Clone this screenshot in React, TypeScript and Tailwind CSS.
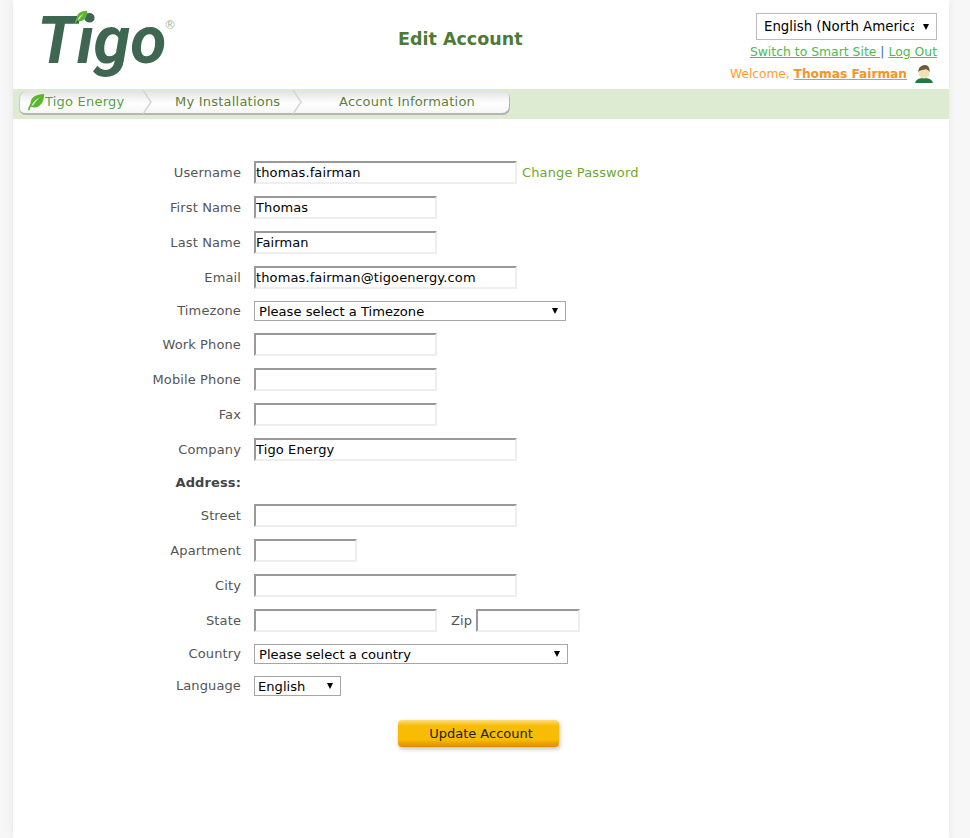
import type { ReactNode } from 'react';

function Leaf({ className }: { className: string }) {
  return (
    <svg viewBox="0 0 20 20" className={className}>
      <path d="M1 19 C2 15 3 13 4 11 C4 5 10 1 19 1 C19 10 15 16 8 16 C6 16 5 15.500 4.500 15 L2.500 19.500 Z" fill="#5cb531" />
      <path d="M5 14 C7 10 10 7 14 5 C11 8 9 10 7 14 Z" fill="#d5f0c0" />
    </svg>
  );
}

function Avatar() {
  return (
    <svg viewBox="0 0 20 20" className="w-5 h-5">
      <path d="M1 19 C2 15 6 14 10 14 C14 14 18 15 19 19 Z" fill="#1f7a46" />
      <ellipse cx="10" cy="9" rx="5.500" ry="5.500" fill="#f3e0b8" />
      <path d="M4.500 8 C4 3 8 1 11 1 C15 1 16 5 15.500 8 C14 6 13 5 11 5.500 C9 6 6 6 4.500 8 Z" fill="#6b5a3c" />
    </svg>
  );
}

function Chevron() {
  return (
    <svg viewBox="0 0 10 24" className="w-2.5 h-6 shrink-0">
      <path d="M1 0 L9 12 L1 24" fill="none" stroke="#d6d6d6" strokeWidth="1.500" />
    </svg>
  );
}

function Row({ label, children }: { label: ReactNode; children?: ReactNode }) {
  return (
    <div className="flex items-center">
      <div className="w-[228px] text-right text-[13px] tracking-[0.12px] text-[#555]">{label}</div>
      <div className="ml-[13px] flex items-center">{children}</div>
    </div>
  );
}

function TextInput({ value = '', className }: { value?: string; className: string }) {
  return (
    <input
      readOnly
      value={value}
      className={`h-[23px] border-2 border-t-[#999] border-l-[#999] border-r-[#eee] border-b-[#eee] px-0 text-[13px] tracking-[0.12px] text-black outline-none ${className}`}
    />
  );
}

function Select({ options, className }: { options: string[]; className: string }) {
  return (
    <div className={`relative ${className}`}>
      <select className="block w-full h-full appearance-none border border-[#a6a6a6] bg-white pl-1 pr-5 text-[13.100px] text-black outline-none">
        {options.map((o) => (
          <option key={o}>{o}</option>
        ))}
      </select>
      <div className="absolute right-[8px] top-1/2 -translate-y-1/2 border-x-[3.500px] border-t-[6px] border-x-transparent border-t-black" />
    </div>
  );
}

export default function App() {
  return (
    <div className="min-h-[838px] bg-[#f7f7f7] font-['DejaVu_Sans','Verdana',sans-serif]">
      <div className="mx-[13px] w-[936px] h-[838px] bg-white shadow-[0_0_8px_rgba(0,0,0,0.08)]">
        {/* Header */}
        <header className="relative flex h-[89px] justify-between">
          <div className="relative ml-[24px] h-[80px] w-[143px]">
            <span className="absolute left-0 top-[1px] text-[66px] leading-[80px] font-bold italic text-[#3f6650] font-['Roboto',sans-serif]">
              Tigo
            </span>
            <Leaf className="absolute left-[37px] top-[9px] w-[14px] h-[16px]" />
            <span className="absolute left-[127px] top-[19px] text-[12px] leading-none text-[#a3b8ac]">®</span>
          </div>
          <h1 className="absolute left-[385px] top-[27px] text-[17.500px] leading-6 font-bold text-[#4e7a35]">Edit Account</h1>
          <div className="mr-[12px] mt-[13px] flex flex-col items-end">
            <Select options={['English (North America)']} className="w-[181px] h-[27px] [&_select]:border-[#bbb] [&_select]:pl-[7px] [&_select]:pr-[22px] [&_select]:text-[13.33px]" />
            <div className="mt-[2px] text-[12.400px] leading-5 text-[#2c6f9e]">
              <a className="text-[#4dbb4d] underline">Switch to Smart Site </a>|{' '}
              <a className="text-[#4dbb4d] underline">Log Out</a>
            </div>
            <div className="mt-[2px] flex items-center text-[12.200px] text-[#ff9c2e]">
              Welcome,&nbsp;<a className="font-bold underline text-[#f7931e]">Thomas Fairman</a>
              <span className="ml-[7px] mr-[3px]">
                <Avatar />
              </span>
            </div>
          </div>
        </header>

        {/* Breadcrumb */}
        <nav className="h-[30px] bg-[#dcebd2] pl-[6px] pt-[2px]">
          <div className="flex h-[24px] w-[491px] items-center rounded-[7px] bg-gradient-to-b from-[#e2e2e2] via-white to-[#f4f4f4] pb-[2px] text-[13px] tracking-[0.22px] text-[#5e7f3c] shadow-[inset_-1px_-2px_0_#b5b5b5,inset_1px_0_0_#c8c8c8]">
            <Leaf className="ml-[8px] w-[18px] h-[18px]" />
            <span className="w-[97px] text-[#55a045]">Tigo Energy</span>
            <Chevron />
            <span className="ml-[23px] w-[117px]">My Installations</span>
            <Chevron />
            <span className="ml-[37px]">Account Information</span>
          </div>
        </nav>

        {/* Form */}
        <form className="mt-[42px] flex flex-col gap-3">
          <Row label="Username">
            <TextInput value="thomas.fairman" className="w-[263px]" />
            <a className="ml-[5px] text-[13px] tracking-[0.13px] text-[#6ea82d]">Change Password</a>
          </Row>
          <Row label="First Name">
            <TextInput value="Thomas" className="w-[183px]" />
          </Row>
          <Row label="Last Name">
            <TextInput value="Fairman" className="w-[183px]" />
          </Row>
          <Row label="Email">
            <TextInput value="thomas.fairman@tigoenergy.com" className="w-[263px]" />
          </Row>
          <Row label="Timezone">
            <Select options={['Please select a Timezone']} className="w-[312px] h-[20px]" />
          </Row>
          <Row label="Work Phone">
            <TextInput className="w-[183px]" />
          </Row>
          <Row label="Mobile Phone">
            <TextInput className="w-[183px]" />
          </Row>
          <Row label="Fax">
            <TextInput className="w-[183px]" />
          </Row>
          <Row label="Company">
            <TextInput value="Tigo Energy" className="w-[263px]" />
          </Row>
          <div className="h-[19px]">
            <Row label={<b className="text-[#444]">Address:</b>} />
          </div>
          <Row label="Street">
            <TextInput className="w-[263px]" />
          </Row>
          <Row label="Apartment">
            <TextInput className="w-[103px]" />
          </Row>
          <Row label="City">
            <TextInput className="w-[263px]" />
          </Row>
          <Row label="State">
            <TextInput className="w-[183px]" />
            <span className="ml-[14px] mr-[4px] text-[13px] tracking-[0.12px] text-[#555]">Zip</span>
            <TextInput className="w-[104px]" />
          </Row>
          <Row label="Country">
            <Select options={['Please select a country']} className="w-[314px] h-[20px]" />
          </Row>
          <Row label="Language">
            <Select options={['English']} className="w-[87px] h-[20px] [&_select]:pl-[3px]" />
          </Row>
          <div className="mt-[12px] ml-[385px]">
            <button
              type="button"
              className="h-[27px] w-[161px] rounded-[4px] bg-[linear-gradient(#fcdc7c,#f9bc05_22%,#f9bc05_72%,#dc8c00)] pl-[5px] text-[13px] text-[#222] shadow-[1px_2px_4px_rgba(0,0,0,0.25)]"
            >
              Update Account
            </button>
          </div>
        </form>
      </div>
    </div>
  );
}
